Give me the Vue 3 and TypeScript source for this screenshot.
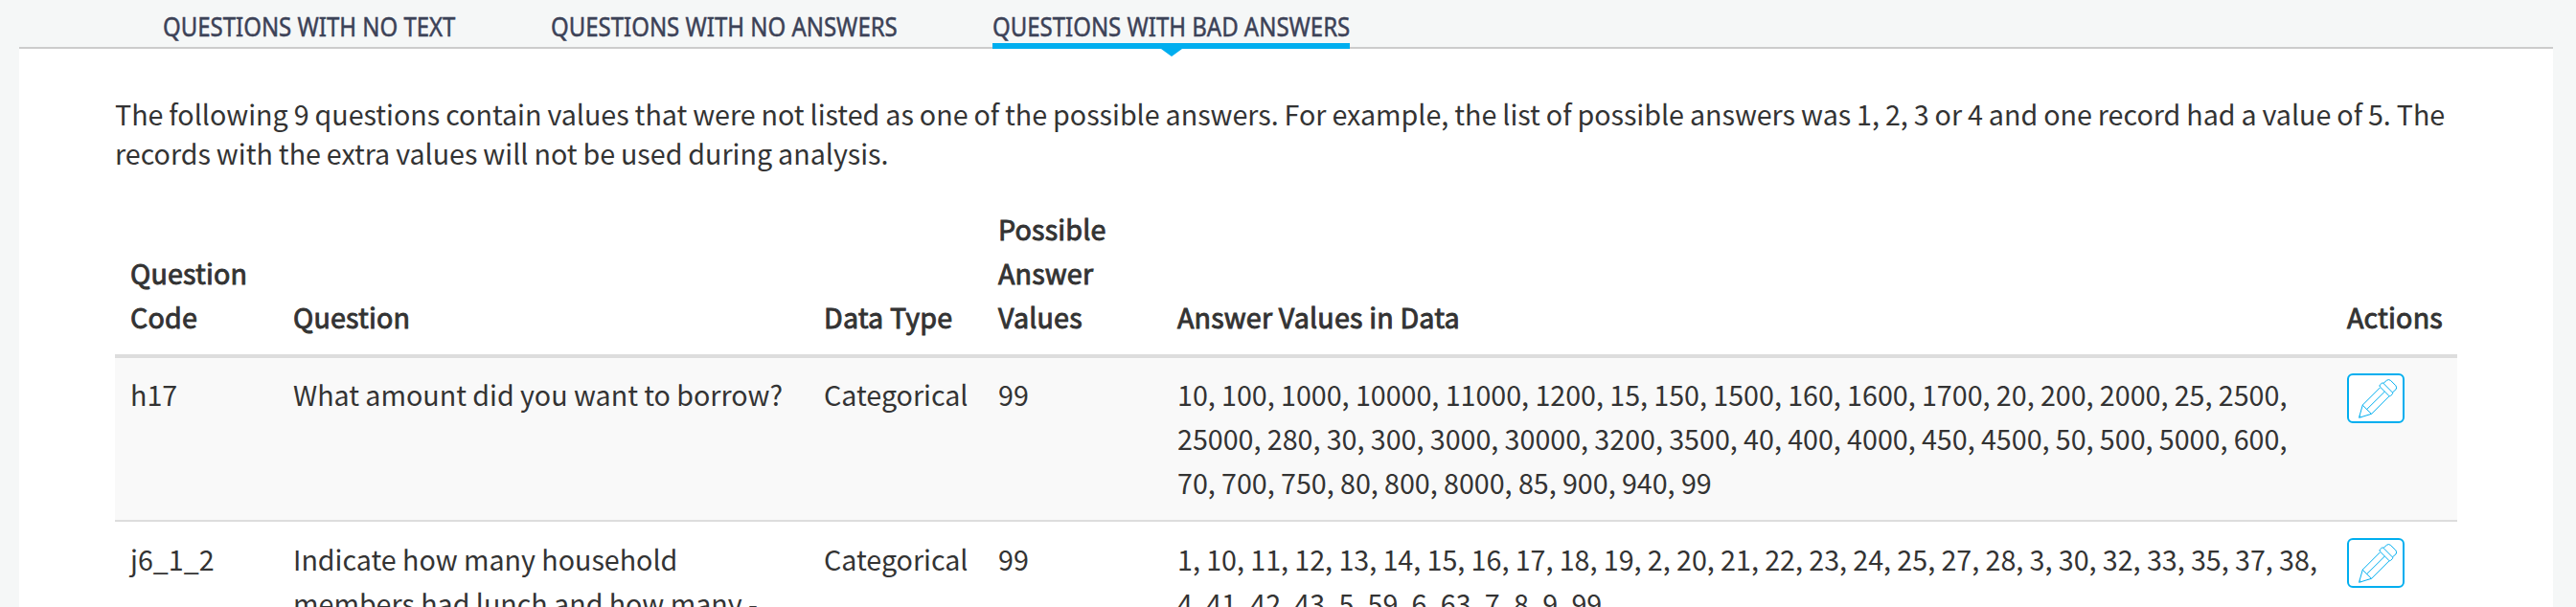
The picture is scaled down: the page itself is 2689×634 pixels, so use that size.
<script setup lang="ts">
interface Row {
  code: string
  question: string[]
  type: string
  possible: string
  values: string[]
}

const tabs = [
  { id: 'text', label: 'QUESTIONS WITH NO TEXT', active: false },
  { id: 'none', label: 'QUESTIONS WITH NO ANSWERS', active: false },
  { id: 'bad', label: 'QUESTIONS WITH BAD ANSWERS', active: true },
]

const intro = [
  'The following 9 questions contain values that were not listed as one of the possible answers. For example, the list of possible answers was 1, 2, 3 or 4 and one record had a value of 5. The',
  'records with the extra values will not be used during analysis.',
]

const headers: string[][] = [
  ['Question', 'Code'],
  ['Question'],
  ['Data Type'],
  ['Possible', 'Answer', 'Values'],
  ['Answer Values in Data'],
  ['Actions'],
]

const rows: Row[] = [
  {
    code: 'h17',
    question: ['What amount did you want to borrow?'],
    type: 'Categorical',
    possible: '99',
    values: [
      '10, 100, 1000, 10000, 11000, 1200, 15, 150, 1500, 160, 1600, 1700, 20, 200, 2000, 25, 2500,',
      '25000, 280, 30, 300, 3000, 30000, 3200, 3500, 40, 400, 4000, 450, 4500, 50, 500, 5000, 600,',
      '70, 700, 750, 80, 800, 8000, 85, 900, 940, 99',
    ],
  },
  {
    code: 'j6_1_2',
    question: ['Indicate how many household', 'members had lunch and how many -'],
    type: 'Categorical',
    possible: '99',
    values: [
      '1, 10, 11, 12, 13, 14, 15, 16, 17, 18, 19, 2, 20, 21, 22, 23, 24, 25, 27, 28, 3, 30, 32, 33, 35, 37, 38,',
      '4, 41, 42, 43, 5, 59, 6, 63, 7, 8, 9, 99',
    ],
  },
]
</script>

<template>
  <div class="page">
    <nav class="tabs">
      <a v-for="t in tabs" :key="t.id" class="tab" :class="[t.id, { active: t.active }]">
        <span class="tab-label">{{ t.label }}</span>
      </a>
    </nav>
    <main class="panel">
      <p class="intro"><span v-for="l in intro" :key="l" class="line">{{ l }}</span></p>
      <div class="table">
        <div class="row head">
          <div v-for="(h, i) in headers" :key="i" class="cell">
            <span v-for="l in h" :key="l" class="line">{{ l }}</span>
          </div>
        </div>
        <div v-for="r in rows" :key="r.code" class="row body">
          <div class="cell">{{ r.code }}</div>
          <div class="cell"><span v-for="l in r.question" :key="l" class="line">{{ l }}</span></div>
          <div class="cell">{{ r.type }}</div>
          <div class="cell">{{ r.possible }}</div>
          <div class="cell"><span v-for="l in r.values" :key="l" class="line">{{ l }}</span></div>
          <div class="cell">
            <button class="edit" aria-label="Edit">
              <svg width="40" height="41" viewBox="0 0 40 41" fill="none" stroke="#00aeef" stroke-width="1" stroke-linejoin="round">
                <path d="M.5 40.3 4.3 27 22.5 8.8M.5 40.3 13.5 36.3 32 17.8M4.3 27.2 13.5 36.3M8.7 31.5 27.2 13.2" />
                <path d="M.8 38.2 2.5 39.8" />
                <path d="m22.5 5.8 1.8-1.6q.8-.6 1.7.2l9.4 9.5q.7.8 0 1.6l-1.9 1.9q-.9.7-1.7 0L22.4 8q-1-1.1.1-2.2Z" />
                <path d="m26 4.4 3.4-3.1q2.1-1.5 4.1.1l5.3 5.3q1.8 2.2.1 4.2l-3.5 3" />
              </svg>
            </button>
          </div>
        </div>
      </div>
    </main>
  </div>
</template>

<style>
body {
  margin: 0;
  background: #f5f7f7;
}
</style>

<style scoped>
.page {
  box-sizing: border-box;
  width: 2689px;
  height: 634px;
  overflow: hidden;
  padding: 0 24px 0 20px;
  background: #f5f7f7;
  color: #333;
  font: 28.65px/46px "Noto Sans CJK SC", sans-serif;
  font-kerning: normal;
}
.tabs {
  box-sizing: border-box;
  height: 51px;
  display: flex;
  gap: 100px;
  padding-left: 150px;
  border-bottom: 2px solid #ccc;
}
.tab {
  box-sizing: border-box;
  position: relative;
  height: 51px;
  padding-top: 7px;
  color: #3c4257;
}
.tab.text { width: 305px; }
.tab.none { width: 361px; }
.tab.bad { width: 373px; }
.tab-label {
  display: block;
  width: max-content;
  height: 38px;
  font: 28px/40px "Noto Sans", sans-serif;
  -webkit-text-stroke: 0.5px #3c4257;
  transform: scaleX(0.856);
  transform-origin: 0 0;
}
.tab.active {
  border-bottom: 6px solid #00aeef;
}
.tab.active::after {
  content: "";
  position: absolute;
  top: 51px;
  left: 50%;
  margin-left: -11px;
  border: solid transparent;
  border-width: 8px 11px 0;
  border-top-color: #00aeef;
}
.panel {
  height: 583px;
  box-sizing: border-box;
  padding: 47px 100px 0;
  background: #fff;
}
.intro {
  margin: 0 0 18.8px;
  line-height: 41.4px;
  padding-bottom: 0.4px;
  word-spacing: -0.46px;
}
.line {
  display: block;
  white-space: nowrap;
}
.row {
  display: grid;
  grid-template-columns: 170px 554px 182px 187px 1221px 131px;
}
.cell {
  padding: 16px;
  white-space: nowrap;
}
.head {
  align-items: end;
  border-bottom: 4px solid #ddd;
  letter-spacing: 0.18px;
  -webkit-text-stroke: 0.9px #333;
}
.body {
  word-spacing: -0.1px;
}
.body .cell {
  padding: 15px 16px 16px;
}
.body + .body {
  border-top: 2px solid #ddd;
}
.body + .body .cell {
  padding-top: 16px;
}
.body:nth-child(2) {
  background: #f9f9f9;
}
.edit {
  display: flex;
  box-sizing: border-box;
  width: 60px;
  height: 52px;
  margin-top: 1px;
  padding: 4px 0 0 10px;
  border: 2px solid #00aeef;
  border-radius: 6px;
  background: #fff;
}
</style>
